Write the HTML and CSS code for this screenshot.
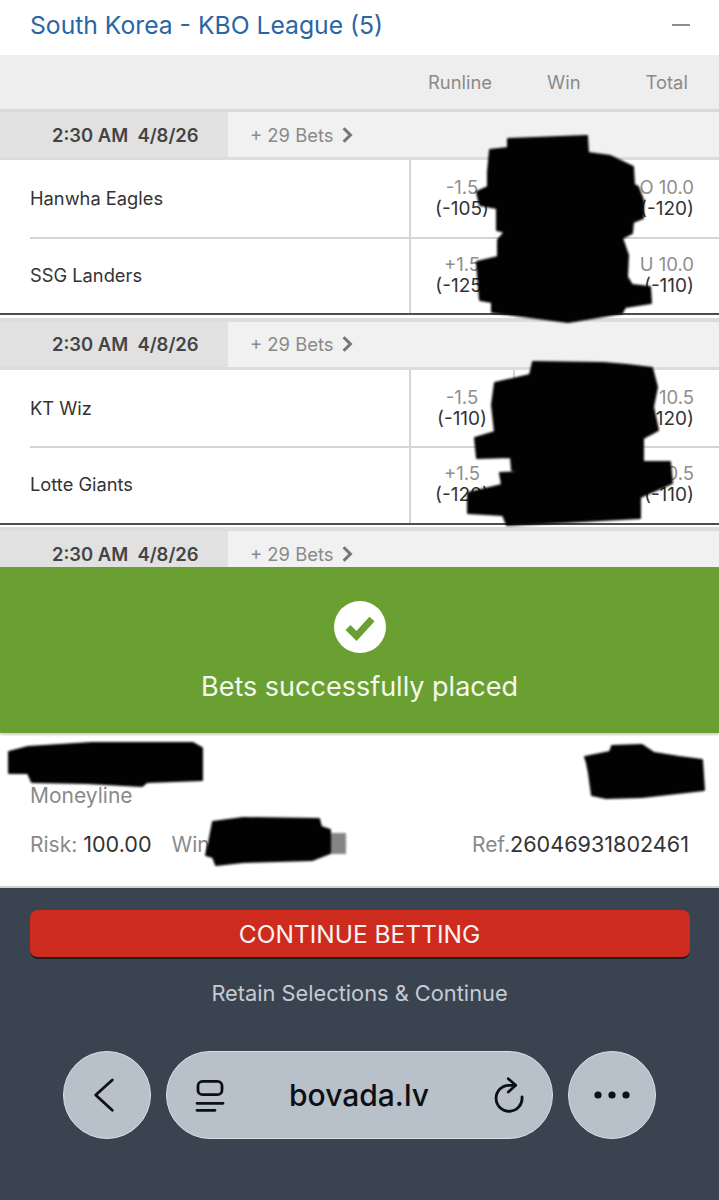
FILE: index.html
```html
<!DOCTYPE html>
<html lang="en">
<head>
<meta charset="utf-8">
<title>Bovada</title>
<link rel="stylesheet" href="styles.css">
</head>
<body>
<div class="page">
  <header class="league">
    <h1 class="league-title">South Korea - KBO League (5)</h1>
    <span class="collapse"></span>
  </header>
  <div class="columns">
    <span class="col-runline">Runline</span>
    <span class="col-win">Win</span>
    <span class="col-total">Total</span>
  </div>
  <div class="events">
    <section class="event">
      <div class="event-head"><div class="event-time">2:30 AM&nbsp;&nbsp;4/8/26</div><div class="event-more">+ 29 Bets<svg class="chev" viewBox="0 0 10 16"><path d="M2 2l6 6-6 6"/></svg></div></div>
      <div class="team">
        <div class="team-name">Hanwha Eagles</div>
        <div class="cell runline"><span class="line">-1.5</span><span class="price">(-105)</span></div>
        <div class="cell win"></div>
        <div class="cell total"><span class="line">O 10.0</span><span class="price">(-120)</span></div>
      </div>
      <div class="team">
        <div class="team-name">SSG Landers</div>
        <div class="cell runline"><span class="line">+1.5</span><span class="price">(-125)</span></div>
        <div class="cell win"></div>
        <div class="cell total"><span class="line">U 10.0</span><span class="price">(-110)</span></div>
      </div>
    </section>
    <section class="event">
      <div class="event-head"><div class="event-time">2:30 AM&nbsp;&nbsp;4/8/26</div><div class="event-more">+ 29 Bets<svg class="chev" viewBox="0 0 10 16"><path d="M2 2l6 6-6 6"/></svg></div></div>
      <div class="team">
        <div class="team-name">KT Wiz</div>
        <div class="cell runline"><span class="line">-1.5</span><span class="price">(-110)</span></div>
        <div class="cell win"></div>
        <div class="cell total"><span class="line">O 10.5</span><span class="price">(-120)</span></div>
      </div>
      <div class="team">
        <div class="team-name">Lotte Giants</div>
        <div class="cell runline"><span class="line">+1.5</span><span class="price">(-120)</span></div>
        <div class="cell win"></div>
        <div class="cell total"><span class="line">U 10.5</span><span class="price">(-110)</span></div>
      </div>
    </section>
    <section class="event">
      <div class="event-head"><div class="event-time">2:30 AM&nbsp;&nbsp;4/8/26</div><div class="event-more">+ 29 Bets<svg class="chev" viewBox="0 0 10 16"><path d="M2 2l6 6-6 6"/></svg></div></div>
    </section>
  </div>
  <div class="success">
    <svg class="check" viewBox="0 0 52 52"><circle cx="26" cy="26" r="26" fill="#fff"/><path d="M14 26.500l8.500 8.500 15.500-17" fill="none" stroke="#6aa031" stroke-width="7"/></svg>
    <div class="success-text">Bets successfully placed</div>
  </div>
  <div class="receipt">
    <div class="market">Moneyline</div>
    <div class="receipt-row">
      <div><span class="lbl">Risk:</span> <span class="val">100.00</span><span class="lbl win-lbl">Win</span></div>
      <div><span class="lbl">Ref.</span><span class="val">26046931802461</span></div>
    </div>
  </div>
  <footer class="footer">
    <button class="continue">CONTINUE BETTING</button>
    <div class="retain">Retain Selections &amp; Continue</div>
    <nav class="browser">
      <div class="round"><svg class="ico-back" viewBox="0 0 24 38"><path class="ico-line" d="M20.300 4L3.700 19l16.600 15.300"/></svg></div>
      <div class="urlbar">
        <svg class="ico-list" viewBox="0 0 32 38"><rect class="ico-line" x="4" y="5.300" width="24" height="13.400" rx="4.500"/><path class="ico-line" d="M3 27.300h26M3 34.300h18"/></svg>
        <span class="url">bovada.lv</span>
        <svg class="ico-reload" viewBox="0 -1 34 38"><path class="ico-line" d="M23.500 8.300H17A13 13 0 1 0 30 20"/><path class="ico-line" d="M16.300 1.700l7.400 6.600-7.400 6.700"/></svg>
      </div>
      <div class="round"><svg class="ico-more" viewBox="0 0 40 12"><circle cx="6" cy="6" r="3.600"/><circle cx="20" cy="6" r="3.600"/><circle cx="34" cy="6" r="3.600"/></svg></div>
    </nav>
  </footer>
  <svg class="redactions" viewBox="0 0 719 1200" aria-hidden="true">
    <polygon points="508,139 587,136 588,153 610,156 633,167 634,185 638,187 643,200 643,218 633,222 632,233 622,238 628,255 627,277 632,285 650,287 651,303 625,307 622,313 568,322 492,312 492,302 480,300 477,262 498,257 498,240 505,232 497,230 497,208 480,205 477,192 488,187 488,172 490,150 508,148"/>
    <polygon points="533,362 603,363 627,365 652,368 657,387 653,407 658,430 643,438 643,462 670,462 672,483 640,497 640,518 507,525 503,515 468,513 468,493 502,485 500,473 532,472 512,470 511,457 477,458 475,438 495,432 492,405 495,383 530,375"/>
    <polygon points="9,752 28,747 92,743 193,743 202,748 202,780 147,782 142,786 87,783 32,782 28,773 9,773"/>
    <polygon points="585,757 610,752 612,746 642,745 654,753 679,757 702,760 704,790 642,797 606,798 592,795 589,773 587,763"/>
    <rect class="fade" x="328" y="833" width="18" height="21"/>
    <polygon points="213,822 243,818 319,819 321,827 330,830 330,853 312,860 243,862 216,865 213,857 206,855 209,843"/>
  </svg>
</div>
</body>
</html>
```
FILE: styles.css
```css
* { box-sizing: border-box; }
html, body { margin: 0; padding: 0; }
body { font-family: Inter, "Noto Sans", sans-serif; background: #fff; color: #333; }
.page { position: relative; width: 719px; height: 1200px; overflow: hidden; display: flex; flex-direction: column; }

.league { height: 55px; flex: none; display: flex; align-items: center; justify-content: space-between; padding: 0 29px 6px 30px; }
.league-title { margin: 0; font-size: 24.700px; font-weight: 400; color: #2a66a3; }
.collapse { width: 18px; height: 2px; background: #8d8d8d; }

.columns { height: 57px; flex: none; display: flex; align-items: center; background: #eee; border-bottom: 3px solid #d9d9d9; font-size: 18.400px; color: #8a8a8a; position: relative; }
.col-runline { margin-left: 428px; }
.col-win { margin-left: 55px; }
.col-total { margin-left: 65px; }

.events { height: 455px; flex: none; overflow: hidden; }
.event { border-bottom: 2px solid #4a4d52; }
.event + .event { margin-top: 2.500px; border-top: 4px solid #dcdcdc; }
.event-head { height: 48px; display: flex; background: #f1f1f1; border-bottom: 3px solid #dcdcdc; }
.event-time { width: 228px; background: #e1e1e1; padding-left: 52px; display: flex; align-items: center; font-size: 18.400px; font-weight: 600; color: #444; }
.event-more { display: flex; align-items: center; gap: 8px; padding-left: 22px; font-size: 18.400px; color: #8a8a8a; }
.chev { width: 12px; height: 18px; fill: none; stroke: #777; stroke-width: 2.800; }

.team { height: 76.500px; display: grid; grid-template-columns: 409px 104px 126px 80px; position: relative; }
.team + .team::before { content: ""; position: absolute; left: 30px; right: 0; top: 0; height: 2px; background: #d4d4d4; }
.team-name { padding-left: 30px; display: flex; align-items: center; font-size: 18.300px; color: #333; }
.cell { border-left: 2px solid #d4d4d4; display: flex; flex-direction: column; justify-content: center; align-items: center; font-size: 18.500px; line-height: 22px; }
.cell.total { border-left: 0; align-items: flex-end; padding-right: 25px; white-space: nowrap; }
.line { color: #8e8e8e; }
.price { color: #333; font-size: 19px; }

.success { height: 166px; flex: none; background: #6aa031; display: flex; flex-direction: column; align-items: center; padding-top: 34px; box-shadow: 0 2px 2px #d0d0d0; position: relative; z-index: 1; }
.check { width: 52px; height: 52px; }
.success-text { margin-top: 17px; font-size: 27px; color: #f4f8ee; }

.receipt { height: 155px; flex: none; background: #fff; border-bottom: 2px solid #cfd2d5; padding: 50px 30px 0; }
.market { font-size: 21px; color: #8a8a8a; line-height: 26px; }
.receipt-row { display: flex; justify-content: space-between; margin-top: 22px; font-size: 21px; line-height: 26px; }
.lbl { color: #8a8a8a; }
.val { color: #333; font-size: 21.600px; }
.win-lbl { margin-left: 20px; }

.footer { flex: 1; background: #3a4350; display: flex; flex-direction: column; align-items: center; padding-top: 22px; }
.continue { width: 660px; height: 49px; border: 0; border-bottom: 2px solid #1d1f24; border-radius: 8px; background: #ce2b1f; color: #f8f2f0; font-family: inherit; font-size: 24.500px; padding: 0; }
.retain { margin-top: 20px; font-size: 21.800px; line-height: 28px; color: #c6cbd1; }
.browser { margin-top: 44px; display: flex; gap: 15px; }
.round { width: 88px; height: 88px; border-radius: 50%; background: #b8c0ca; border: 1px solid #dbe0e6; display: flex; align-items: center; justify-content: center; }
.urlbar { width: 387px; height: 88px; border-radius: 44px; background: #b8c0ca; border: 1px solid #dbe0e6; display: flex; align-items: center; justify-content: space-between; padding: 0 26px 0 27px; }
.ico-line { fill: none; stroke: #0c0f14; stroke-width: 2.800; stroke-linecap: round; stroke-linejoin: round; }
.ico-back { width: 24px; height: 38px; margin-right: 6px; }
.ico-list { width: 32px; height: 38px; }
.ico-reload { width: 34px; height: 38px; }
.ico-more { width: 40px; height: 12px; fill: #0c0f14; }
.url { font-size: 30px; font-weight: 500; color: #0c0f14; }

.redactions { position: absolute; left: 0; top: 0; width: 719px; height: 1200px; z-index: 2; pointer-events: none; filter: blur(1px); }
.redactions polygon { fill: #020202; stroke: #020202; stroke-width: 2; stroke-linejoin: round; }
.fade { fill: #5c5c5c; opacity: .75; }
```
